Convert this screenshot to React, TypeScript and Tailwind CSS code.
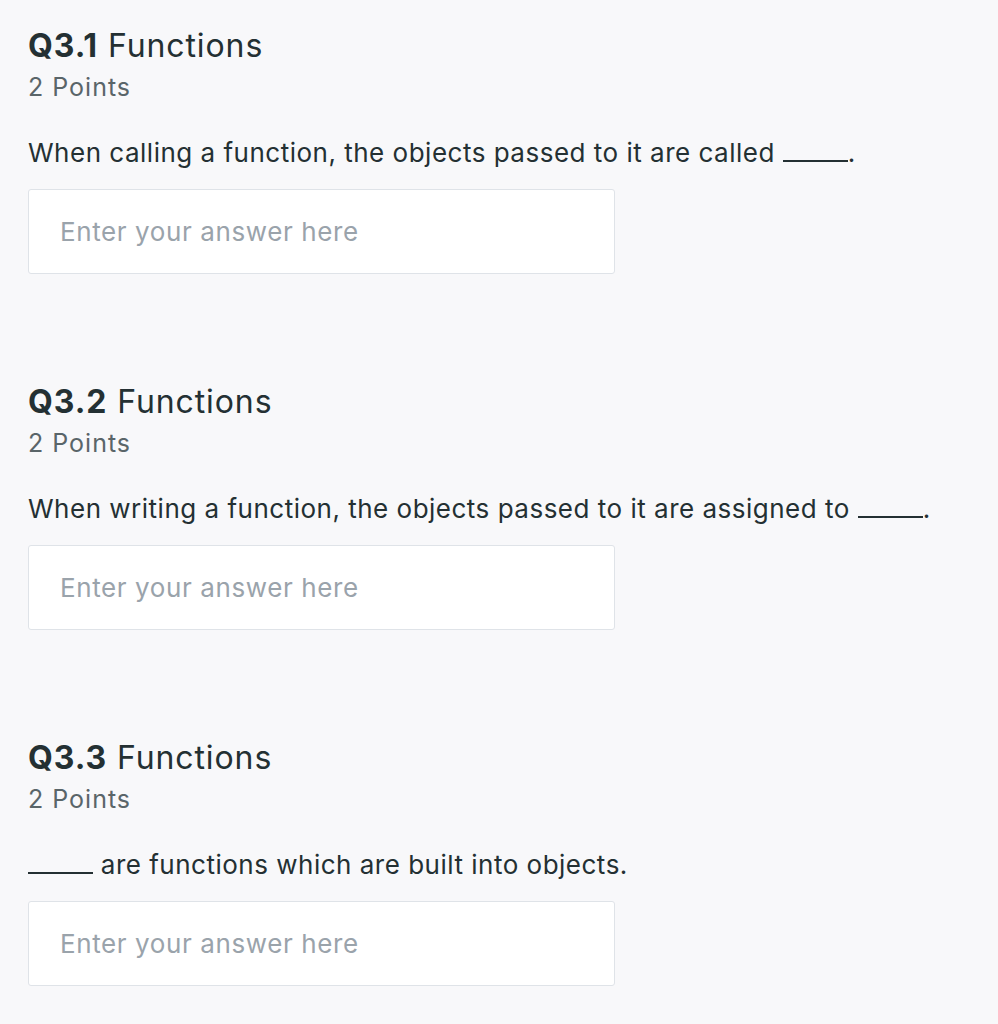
import React from "react";

const Blank = () => <span className="inline-block h-[2px] w-[65px] bg-current align-baseline" />;

const questions = [
  { num: "Q3.1", text: <>When calling a function, the objects passed to it are called <Blank />.</> },
  { num: "Q3.2", text: <>When writing a function, the objects passed to it are assigned to <Blank />.</> },
  { num: "Q3.3", text: <><Blank /> are functions which are built into objects.</> },
];

const font = { fontFamily: "Inter, 'Open Sans', sans-serif" };

export default function App() {
  return (
    <div className="min-h-[1024px] w-full bg-[#f8f8fa] pl-[28px] pt-[26px] text-[#243033]" style={font}>
      {questions.map((q, i) => (
        <div key={q.num} className={i < 2 ? "pb-[108px]" : "pb-[30px]"}>
          <div className="h-[40px] text-[32px] leading-[40px] tracking-[0.9px] whitespace-nowrap">
            <span className="font-bold">{q.num}</span> Functions
          </div>
          <div className="mt-[6px] h-[30px] text-[25px] leading-[30px] tracking-[1px] text-[#5a6569]">2 Points</div>
          <div className="mt-[33px] h-[36px] text-[26px] leading-[36px] tracking-[0.5px] whitespace-nowrap">{q.text}</div>
          <div className="mt-[18px] flex h-[85px] w-[587px] items-center rounded-[3px] border border-[#dfe3e8] bg-white pl-[31px]">
            <input
              className="w-full bg-transparent text-[26px] tracking-[0.6px] text-[#243033] outline-none placeholder:text-[#9aa3ab]"
              placeholder="Enter your answer here"
              style={font}
            />
          </div>
        </div>
      ))}
    </div>
  );
}
